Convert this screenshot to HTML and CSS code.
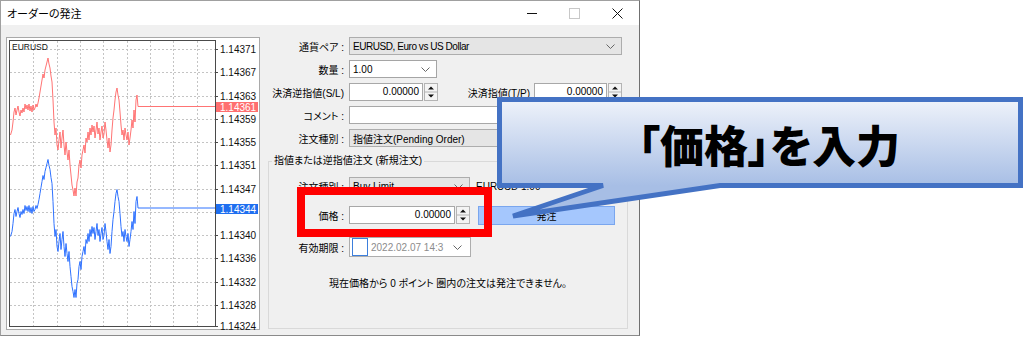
FILE: index.html
```html
<!DOCTYPE html>
<html lang="ja">
<head>
<meta charset="utf-8">
<title>オーダーの発注</title>
<link rel="stylesheet" href="styles.css">
</head>
<body>
<div class="window">
  <div class="titlebar">
    <span class="title">オーダーの発注</span>
    <div class="controls">
      <span class="ctl"><svg width="10" height="10" viewBox="0 0 10 10"><line x1="0" y1="5.5" x2="10" y2="5.5" stroke="#111" stroke-width="1"/></svg></span>
      <span class="ctl"><svg width="11" height="11" viewBox="0 0 11 11"><rect x="0.5" y="0.5" width="10" height="10" fill="none" stroke="#c8c8c8"/></svg></span>
      <span class="ctl"><svg width="11" height="11" viewBox="0 0 11 11"><path d="M0.5 0.5L10.5 10.5M10.5 0.5L0.5 10.5" stroke="#111" stroke-width="1"/></svg></span>
    </div>
  </div>
  <div class="content">
    <div class="chart">
      <svg class="chart-svg" width="254" height="296" viewBox="6 37 254 296">
        <defs>
          <polyline id="price" fill="none" stroke-width="1" stroke-linejoin="round" points="10.5,135 12,130 13,122 14,112 15,108 16,115 17,110 18,106 19,112 20,116 21,110 22,113 23,108 24,112 25,104 26,109 27,105 28,110 29,104 30,111 31,106 32,112 33,105 34,110 35,108 36,104 37,107 38,103 39,98 40,92 41,86 42,80 43,74 44,78 45,70 46,66 47,62 48,58 49,64 50,68 51,76 52,82 53,100 54,122 55,135 56,128 57,145 58,150 59,140 60,132 61,148 62,138 63,130 64,145 65,155 66,142 67,152 68,160 69,150 70,165 71,175 72,185 73,190 74,196 75,188 76,196 77,182 78,178 79,165 80,160 81,168 82,155 83,150 84,145 85,153 86,138 87,142 88,132 89,140 90,128 91,135 92,125 93,132 94,126 95,138 96,130 97,122 98,134 99,128 100,140 101,132 102,126 103,138 104,134 105,122 106,130 107,140 108,148 109,138 110,152 111,145 112,130 113,118 114,110 115,100 116,92 117,88 118,95 119,100 120,112 121,125 122,135 123,130 124,140 125,128 126,135 127,140 128,132 129,145 130,138 131,130 132,120 133,128 134,110 135,122 136,100 137,95 138,106.5 215,106.5"/>
        </defs>
        <rect x="6.5" y="37.5" width="253" height="292" fill="#fff" stroke="#a9a9a9"/>
        <g stroke="#c4c4c4" stroke-dasharray="2,2" stroke-width="1">
          <line x1="33.5" y1="41" x2="33.5" y2="326"/>
          <line x1="57.5" y1="41" x2="57.5" y2="326"/>
          <line x1="80.5" y1="41" x2="80.5" y2="326"/>
          <line x1="103.5" y1="41" x2="103.5" y2="326"/>
          <line x1="127.5" y1="41" x2="127.5" y2="326"/>
          <line x1="150.5" y1="41" x2="150.5" y2="326"/>
          <line x1="173.5" y1="41" x2="173.5" y2="326"/>
          <line x1="197.5" y1="41" x2="197.5" y2="326"/>
          <line x1="10" y1="49.5" x2="215" y2="49.5"/>
          <line x1="10" y1="72.5" x2="215" y2="72.5"/>
          <line x1="10" y1="96.5" x2="215" y2="96.5"/>
          <line x1="10" y1="119.5" x2="215" y2="119.5"/>
          <line x1="10" y1="142.5" x2="215" y2="142.5"/>
          <line x1="10" y1="165.5" x2="215" y2="165.5"/>
          <line x1="10" y1="189.5" x2="215" y2="189.5"/>
          <line x1="10" y1="212.5" x2="215" y2="212.5"/>
          <line x1="10" y1="235.5" x2="215" y2="235.5"/>
          <line x1="10" y1="258.5" x2="215" y2="258.5"/>
          <line x1="10" y1="282.5" x2="215" y2="282.5"/>
          <line x1="10" y1="305.5" x2="215" y2="305.5"/>
        </g>
        <use href="#price" stroke="#ff7474"/>
        <use href="#price" stroke="#2f72ff" transform="translate(0,101.5)"/>
        <rect x="9.5" y="40.5" width="206" height="286" fill="none" stroke="#4a4a4a"/>
        <g stroke="#4a4a4a">
          <line x1="215" y1="49.5" x2="218" y2="49.5"/>
          <line x1="215" y1="72.5" x2="218" y2="72.5"/>
          <line x1="215" y1="96.5" x2="218" y2="96.5"/>
          <line x1="215" y1="119.5" x2="218" y2="119.5"/>
          <line x1="215" y1="142.5" x2="218" y2="142.5"/>
          <line x1="215" y1="165.5" x2="218" y2="165.5"/>
          <line x1="215" y1="189.5" x2="218" y2="189.5"/>
          <line x1="215" y1="235.5" x2="218" y2="235.5"/>
          <line x1="215" y1="258.5" x2="218" y2="258.5"/>
          <line x1="215" y1="282.5" x2="218" y2="282.5"/>
          <line x1="215" y1="305.5" x2="218" y2="305.5"/>
          <line x1="215" y1="326.5" x2="218" y2="326.5"/>
        </g>
        <text class="sym" x="12" y="50">EURUSD</text>
        <g class="axis">
          <text x="220" y="53">1.14371</text>
          <text x="220" y="76">1.14367</text>
          <text x="220" y="100">1.14363</text>
          <text x="220" y="123">1.14359</text>
          <text x="220" y="146">1.14355</text>
          <text x="220" y="169">1.14351</text>
          <text x="220" y="193">1.14347</text>
          <text x="220" y="239">1.14340</text>
          <text x="220" y="262">1.14336</text>
          <text x="220" y="286">1.14332</text>
          <text x="220" y="309">1.14328</text>
          <text x="220" y="330">1.14324</text>
        </g>
        <rect x="216" y="102" width="42" height="10" fill="#ff6f6f"/>
        <text class="tag" x="220" y="110.5">1.14361</text>
        <rect x="216" y="204" width="42" height="10" fill="#1f6ff0"/>
        <text class="tag" x="220" y="212.5">1.14344</text>
      </svg>
    </div>
    <div class="form">
      <div class="row">
        <span class="lbl">通貨ペア :</span>
        <div class="combo grey w-full"><span class="narrow">EURUSD, Euro vs US Dollar</span><svg class="chev" width="9" height="5" viewBox="0 0 9 5"><polyline points="0.5,0.5 4.5,4.5 8.5,0.5" fill="none" stroke="#666"/></svg></div>
      </div>
      <div class="row">
        <span class="lbl">数量 :</span>
        <div class="combo white w-lot"><span>1.00</span><svg class="chev" width="9" height="5" viewBox="0 0 9 5"><polyline points="0.5,0.5 4.5,4.5 8.5,0.5" fill="none" stroke="#666"/></svg></div>
      </div>
      <div class="row">
        <span class="lbl">決済逆指値(S/L)</span>
        <div class="input w-sl">0.00000</div>
        <svg class="spin" width="14" height="18" viewBox="0 0 14 18"><rect x="0.5" y="0.5" width="13" height="17" fill="#f4f4f4" stroke="#b4b4b4"/><line x1="1" y1="9" x2="13" y2="9" stroke="#b4b4b4"/><path d="M4 6.5H10L7 3.5Z M4 11.5H10L7 14.5Z" fill="#111"/></svg>
        <span class="lbl tp">決済指値(T/P)</span>
        <div class="input w-tp">0.00000</div>
        <svg class="spin" width="14" height="18" viewBox="0 0 14 18"><rect x="0.5" y="0.5" width="13" height="17" fill="#f4f4f4" stroke="#b4b4b4"/><line x1="1" y1="9" x2="13" y2="9" stroke="#b4b4b4"/><path d="M4 6.5H10L7 3.5Z M4 11.5H10L7 14.5Z" fill="#111"/></svg>
      </div>
      <div class="row">
        <span class="lbl">コメント :</span>
        <div class="input w-full"></div>
      </div>
      <div class="row last">
        <span class="lbl">注文種別 :</span>
        <div class="combo grey w-full"><span>指値注文(Pending Order)</span><svg class="chev" width="9" height="5" viewBox="0 0 9 5"><polyline points="0.5,0.5 4.5,4.5 8.5,0.5" fill="none" stroke="#666"/></svg></div>
      </div>
      <fieldset class="group">
        <legend>指値または逆指値注文 (新規注文)</legend>
        <div class="grow">
          <span class="lbl g">注文種別 :</span>
          <div class="combo grey w-type"><span>Buy Limit</span><svg class="chev" width="9" height="5" viewBox="0 0 9 5"><polyline points="0.5,0.5 4.5,4.5 8.5,0.5" fill="none" stroke="#666"/></svg></div>
          <span class="info">EURUSD 1.00</span>
        </div>
        <div class="grow price">
          <span class="lbl g">価格 :</span>
          <div class="input w-price">0.00000</div>
          <svg class="spin" width="14" height="18" viewBox="0 0 14 18"><rect x="0.5" y="0.5" width="13" height="17" fill="#f4f4f4" stroke="#b4b4b4"/><line x1="1" y1="9" x2="13" y2="9" stroke="#b4b4b4"/><path d="M4 6.5H10L7 3.5Z M4 11.5H10L7 14.5Z" fill="#111"/></svg>
          <div class="btn">発注</div>
        </div>
        <div class="grow expiry">
          <span class="lbl g">有効期限 :</span>
          <div class="date"><span class="check"></span><span class="dtext">2022.02.07 14:3</span><svg class="chev" width="9" height="5" viewBox="0 0 9 5"><polyline points="0.5,0.5 4.5,4.5 8.5,0.5" fill="none" stroke="#666"/></svg></div>
        </div>
        <p class="note">現在価格から 0 ポイント 圏内の注文は発注できません。</p>
      </fieldset>
    </div>
  </div>
</div>

<div class="redbox"></div>

<svg class="callout" width="534" height="135" viewBox="490 90 534 135">
  <defs>
    <linearGradient id="cg" gradientUnits="userSpaceOnUse" x1="0" y1="100" x2="0" y2="186">
      <stop offset="0" stop-color="#eef2fa"/>
      <stop offset="1" stop-color="#a7bee5"/>
    </linearGradient>
  </defs>
  <path d="M499.5,99.5 H1020.5 V185.5 H720 L513,216 L603,185.5 H499.5 Z" fill="url(#cg)" stroke="#4472c4" stroke-width="5" stroke-linejoin="miter" stroke-miterlimit="3"/>
  <text class="callout-text" x="769" y="163" text-anchor="middle">「価格」を入力</text>
</svg>
</body>
</html>
```

FILE: styles.css
```css
html, body {
  margin: 0;
  padding: 0;
}

body {
  position: relative;
  width: 1024px;
  height: 339px;
  overflow: hidden;
  background: #ffffff;
  font-family: "Liberation Sans", "Noto Sans CJK JP", sans-serif;
  font-size: 10px;
  color: #000;
  font-feature-settings: "palt";
}

.window {
  width: 640px;
  height: 336px;
  box-sizing: border-box;
  border: 1px solid #a0a0a0;
  border-right-color: #707070;
  border-bottom-color: #8a8a8a;
  background: #f0f0f0;
  display: flex;
  flex-direction: column;
}

.titlebar {
  flex: none;
  height: 24px;
  background: #ffffff;
  display: flex;
  align-items: center;
  justify-content: space-between;
}

.title {
  padding-left: 6px;
  font-family: "Noto Sans CJK JP", sans-serif;
  font-size: 11px;
  font-feature-settings: "palt";
}

.controls {
  display: flex;
}

.ctl {
  width: 43px;
  height: 24px;
  display: flex;
  align-items: center;
  justify-content: center;
}

.ctl svg {
  display: block;
}

.content {
  display: flex;
  padding: 12px 0 0 5px;
}

.chart {
  flex: none;
  width: 254px;
  height: 296px;
}

.chart-svg {
  display: block;
}

.chart-svg text {
  font-family: "Liberation Sans", sans-serif;
}

.axis text {
  font-size: 10px;
  fill: #111;
}

.sym {
  font-size: 8.5px;
  fill: #111;
}

.tag {
  font-size: 10px;
  fill: #ffffff;
}

.form {
  margin-left: 8px;
  width: 360px;
  display: flex;
  flex-direction: column;
}

.row {
  display: flex;
  align-items: center;
  height: 18px;
  margin-bottom: 5px;
}

.row.last {
  margin-bottom: 0;
}

.lbl {
  flex: none;
  width: 81px;
  box-sizing: border-box;
  padding-right: 5px;
  text-align: right;
  white-space: nowrap;
}

.lbl.g {
  width: 80px;
}

.lbl.tp {
  width: 73px;
  margin-left: 23px;
  padding-right: 4px;
}

.combo {
  flex: none;
  height: 18px;
  box-sizing: border-box;
  border: 1px solid #adadad;
  display: flex;
  align-items: center;
  justify-content: space-between;
  padding: 0 6px 0 3px;
  white-space: nowrap;
}

.combo.grey {
  background: #e5e5e5;
}

.combo.white {
  background: #ffffff;
  border-color: #a5a5a5;
}

.narrow {
  letter-spacing: -0.45px;
}

.chev {
  display: block;
  flex: none;
}

.input {
  flex: none;
  height: 18px;
  box-sizing: border-box;
  background: #ffffff;
  border: 1px solid #a8a8a8;
  text-align: right;
  padding-right: 3px;
  line-height: 16px;
}

.spin {
  display: block;
  flex: none;
  margin-left: 1px;
}

.w-full { width: 273px; }
.w-lot { width: 88px; }
.w-sl { width: 74px; }
.w-tp { width: 73px; }
.w-type { width: 121px; }
.w-price { width: 106px; }

.group {
  margin: 7px 0 0 0;
  padding: 9px 0 0 0;
  border: 1px solid #d9d9d9;
  height: 175px;
  box-sizing: border-box;
  min-width: 0;
}

.group legend {
  margin-left: 3px;
  padding: 0 2px;
  line-height: 14px;
  font-size: 10px;
}

.grow {
  display: flex;
  align-items: center;
  height: 18px;
}

.grow.price {
  margin-top: 11px;
}

.grow.expiry {
  margin-top: 13px;
  height: 20px;
}

.info {
  margin-left: 6px;
  white-space: nowrap;
}

.btn {
  flex: none;
  margin-left: 8px;
  width: 137px;
  height: 19px;
  box-sizing: border-box;
  background: #a5c7fd;
  border: 1px solid #7aa6ee;
  display: flex;
  align-items: center;
  justify-content: center;
}

.date {
  flex: none;
  width: 122px;
  height: 20px;
  box-sizing: border-box;
  border: 1px solid #adadad;
  background: #ffffff;
  display: flex;
  align-items: center;
  padding: 0 8px 0 2px;
}

.check {
  flex: none;
  width: 16px;
  height: 18px;
  box-sizing: border-box;
  border: 1px solid #3d7fdc;
  background: #ffffff;
}

.dtext {
  margin-left: 3px;
  color: #8c8c8c;
  white-space: nowrap;
  flex: 1;
}

.note {
  margin: 20px 0 0 0;
  line-height: 14px;
  text-align: center;
}

.redbox {
  position: absolute;
  left: 297px;
  top: 187px;
  width: 195px;
  height: 50px;
  box-sizing: border-box;
  border: 8px solid #ff0000;
}

.callout {
  position: absolute;
  left: 490px;
  top: 90px;
  display: block;
}

.callout-text {
  font-family: "Noto Sans CJK JP", sans-serif;
  font-size: 44px;
  font-weight: 900;
  font-feature-settings: "palt";
  fill: #000;
}
```
